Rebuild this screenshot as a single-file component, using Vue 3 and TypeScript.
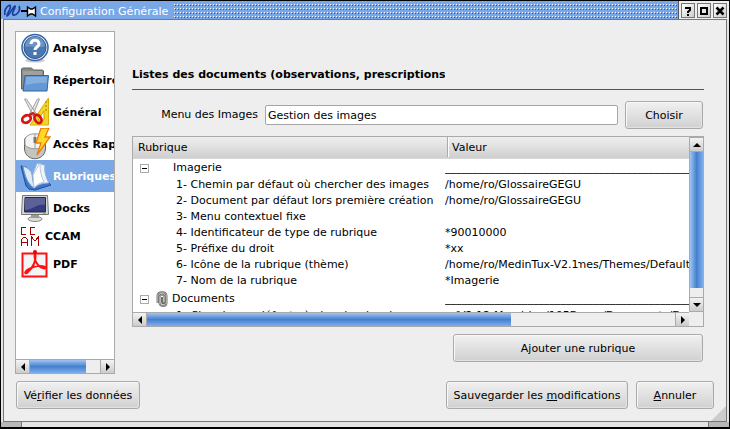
<script setup lang="ts">
import { ref } from 'vue'

interface NavItem {
  id: string
  label: string
  small?: boolean
}
interface TreeRow {
  label: string
  value: string
  clippedTail?: string
}

const navItems: NavItem[] = [
  { id: 'analyse', label: 'Analyse' },
  { id: 'repertoire', label: 'Répertoires' },
  { id: 'general', label: 'Général' },
  { id: 'acces', label: 'Accès Rapide' },
  { id: 'rubriques', label: 'Rubriques' },
  { id: 'docks', label: 'Docks' },
  { id: 'ccam', label: 'CCAM', small: true },
  { id: 'pdf', label: 'PDF' },
]
const selected = ref('rubriques')
const menuImages = ref('Gestion des images')
const rule = '_'.repeat(60)

const imagerie: TreeRow[] = [
  { label: '1- Chemin par défaut où chercher des images', value: '/home/ro/GlossaireGEGU' },
  { label: '2- Document par défaut lors première création', value: '/home/ro/GlossaireGEGU' },
  { label: '3- Menu contextuel fixe', value: '' },
  { label: '4- Identificateur de type de rubrique', value: '*90010000' },
  { label: '5- Préfixe du droit', value: '*xx' },
  { label: '6- Icône de la rubrique (thème)', value: '/home/ro/MedinTux-V2.1', clippedTail: 'mes/Themes/Default' },
  { label: '7- Nom de la rubrique', value: '*Imagerie' },
]
</script>

<template>
  <div class="window">
    <header class="titlebar">
      <svg class="logo" width="34" height="16" viewBox="0 0 34 16">
        <path d="M1 12C0 8 2 3 6 2M6 2c2 3-3 8-3 11 3-1 5-8 8-10 1 2-4 7-2 9 4 1 8-5 6-9" fill="none" stroke="#1b3f9c" stroke-width="1.700" stroke-linejoin="round" />
        <path d="M17 8h6" stroke="#000" stroke-width="2" />
        <path d="M23.500 4l3 2h2l3-2v9l-3-2h-2l-3 2z" fill="#fff" stroke="#000" stroke-width="1.400" />
      </svg>
      <h1>Configuration Générale</h1>
      <div class="dots"></div>
      <div class="controls">
        <button type="button" aria-label="Aide">
          <svg width="12" height="12" viewBox="0 0 12 12"><path d="M4 4V3h4v2L6 7v1M6 9v2" fill="none" stroke="#000" stroke-width="2" /></svg>
        </button>
        <button type="button" aria-label="Agrandir">
          <svg width="12" height="12" viewBox="0 0 12 12"><path d="M3 3h6v6H3z" fill="none" stroke="#000" stroke-width="2" /></svg>
        </button>
        <button type="button" aria-label="Fermer">
          <svg width="12" height="12" viewBox="0 0 12 12"><path d="M2.500 2.500l7 7M9.500 2.500l-7 7" stroke="#000" stroke-width="2.600" /></svg>
        </button>
      </div>
    </header>

    <main class="dialog">
      <div class="columns">
        <nav class="sidebar" aria-label="Sections">
          <div class="navlist">
            <button
              v-for="item in navItems"
              :key="item.id"
              type="button"
              class="navitem"
              :class="{ active: selected === item.id, small: item.small }"
              @click="selected = item.id"
            >
              <svg v-if="item.id === 'analyse'" width="28" height="30" viewBox="0 0 28 30">
                <ellipse cx="14" cy="27.500" rx="10" ry="2" fill="#ccc" />
                <circle cx="14" cy="14.500" r="13" fill="#e9eff7" stroke="#3465a4" stroke-width="1.500" />
                <circle cx="14" cy="14.500" r="11" fill="#4a78b4" stroke="#2c548c" />
                <path d="M4 14a10 10 0 0 1 20-1C18 16 10 12 4 14z" fill="#7ba1cf" opacity=".7" />
                <path d="M10 11c0-5 8-5 8 0 0 3-4 3-4 6" fill="none" stroke="#fff" stroke-width="3" />
                <path d="M12.500 19h3v3h-3z" fill="#fff" />
              </svg>
              <svg v-else-if="item.id === 'repertoire'" width="28" height="30" viewBox="0 0 28 30">
                <path d="M.500 24V4l1-1h9l2 2h9l1 1v18z" fill="#888a85" stroke="#62645f" />
                <path d="M2 7h19M2 9h19" stroke="#b8b9b5" />
                <path d="M4 10.500h23.500L26 26H2z" fill="#6599d3" stroke="#2f65a5" />
                <path d="M5.500 12H26l-.5 6C18 17 11 19 4.500 20z" fill="#91b8e3" opacity=".7" />
              </svg>
              <svg v-else-if="item.id === 'general'" width="28" height="30" viewBox="0 0 28 30">
                <path d="M27.500 1v27H9z" fill="#f4d527" stroke="#d6af05" />
                <path d="M23 14v9h-6z" fill="#fff" stroke="#c9a503" />
                <path d="M26 5h-2M26 9h-2M26 13h-2" stroke="#9b7b00" />
                <path d="M3.500 2l2 0 10 15-3 2zM18.500 2l-2 0-8 15 3 2z" fill="#e5e5e3" stroke="#a0a29c" />
                <ellipse cx="5.500" cy="22" rx="4.500" ry="3.500" transform="rotate(-30 5.500 22)" fill="none" stroke="#d51616" stroke-width="2.800" />
                <ellipse cx="17" cy="22" rx="3" ry="4.500" transform="rotate(-35 17 22)" fill="none" stroke="#d51616" stroke-width="2.800" />
                <path d="M8 18l4-2 3 3" fill="none" stroke="#d51616" stroke-width="2" />
              </svg>
              <svg v-else-if="item.id === 'acces'" width="28" height="32" viewBox="0 0 28 32">
                <path d="M3.500 12c0-7 21-7 21 0v9c-1 13-20 13-21 0z" fill="#c4c5c1" stroke="#666864" />
                <path d="M4 17V11C6 4 22 4 24 11v6c-4 5-16 5-20 0z" fill="#f4f4f2" stroke="#999b96" />
                <path d="M14 6v14" stroke="#999b96" />
                <path d="M12.500 9h3v6h-3z" fill="#777" />
                <path d="M20 0h8l-4 9h5L16 27l4-12h-5z" fill="#ffd927" stroke="#f57900" stroke-width="1.300" />
              </svg>
              <svg v-else-if="item.id === 'rubriques'" width="28" height="32" viewBox="0 0 28 32">
                <path d="M0 6l5 1 8 17 13-3 4 4-16 5-6-1-3-3z" fill="#3c76cf" stroke="#1e4e9c" stroke-linejoin="round" />
                <path d="M2 6c5 2 8 4 9 8l2 14C8 25 4 18 2 6z" fill="#dfeaf7" stroke="#6d97d0" />
                <path d="M12 13l4-10 8 2c-1 6 1 13 4 18-5 0-11 1-15 5z" fill="#eef3fa" stroke="#8dadd8" />
                <path d="M12 15l7-12c0 8 1 13 4 19-4 1-8 3-10 6z" fill="#fff" stroke="#b5c7df" />
              </svg>
              <svg v-else-if="item.id === 'docks'" width="28" height="30" viewBox="0 0 28 30">
                <ellipse cx="14" cy="26" rx="7" ry="2.500" fill="#dcdcda" stroke="#888a85" />
                <path d="M10 21h8v4h-8z" fill="#999b96" />
                <path d="M1.500 2.500h25l1 19H.500z" fill="#d8d9d5" stroke="#777973" stroke-linejoin="round" />
                <path d="M4 4.500h20.500v14.500H3.500z" fill="#333b7e" stroke="#26284d" />
                <path d="M4 5h20v7C17 10 10 17 4 17z" fill="#7278a8" opacity=".65" />
                <path d="M22 21h3" stroke="#4e9a06" />
              </svg>
              <svg v-else-if="item.id === 'ccam'" width="20" height="20" viewBox="0 0 20 20" shape-rendering="crispEdges">
                <path d="M5 1.500H.500V8.500H5M14 1.500H9.500V8.500H14M.500 20v-6l2-3h2l2 3v6M.500 16.500h6M10.500 20v-9l3.500 4 3.500-4v9" fill="none" stroke="#a40000" />
              </svg>
              <svg v-else width="28" height="30" viewBox="0 0 28 30">
                <path d="M1.500 4.500h24v23h-24z" fill="#f3f6f6" stroke="#f11" stroke-width="2" />
                <path d="M14 4c2 7-2 15-8 20-3 1-2-2 2-4 6-3 12-4 16-2 2 2-3 2-6-1-4-4-5-9-4-13z" fill="none" stroke="#f11" stroke-width="2" stroke-linejoin="round" />
                <circle cx="14" cy="3" r="2" fill="#e00" />
              </svg>
              <span>{{ item.label }}</span>
            </button>
          </div>
          <div class="hbar">
            <button type="button" class="arrow" aria-label="Gauche"><svg width="4" height="8" viewBox="0 0 4 8"><path d="M4 0v8L0 4z" /></svg></button>
            <div class="track"><div class="thumb nav-thumb"></div></div>
            <button type="button" class="arrow" aria-label="Droite"><svg width="4" height="8" viewBox="0 0 4 8"><path d="M0 0v8l4-4z" /></svg></button>
          </div>
        </nav>

        <section class="panel">
          <h2><span>Listes des documents (observations, prescriptions)</span></h2>
          <div class="form">
            <label for="menu-images">Menu des Images</label>
            <input id="menu-images" v-model="menuImages" type="text" />
            <button type="button" class="btn choose">Choisir</button>
          </div>

          <div class="tree">
            <div class="tree-row">
              <div class="viewport">
                <table>
                  <colgroup><col class="col-name" /><col /></colgroup>
                  <thead>
                    <tr><th scope="col">Rubrique</th><th scope="col" class="second"><span>Valeur</span></th></tr>
                  </thead>
                  <tbody>
                    <tr class="group">
                      <td><div class="group-cell"><button type="button" class="toggle" aria-label="Replier Imagerie"></button><span class="group-name plain">Imagerie</span></div></td>
                      <td>{{ rule }}</td>
                    </tr>
                    <tr v-for="row in imagerie" :key="row.label">
                      <td class="child">{{ row.label }}</td>
                      <td>{{ row.value }}<span v-if="row.clippedTail" class="tail"><span>{{ row.clippedTail }}</span></span></td>
                    </tr>
                    <tr class="group documents">
                      <td>
                        <div class="group-cell">
                          <button type="button" class="toggle" aria-label="Replier Documents"></button>
                          <svg class="clip" width="12" height="16" viewBox="0 0 12 16">
                            <path d="M1.500 12V5c0-5 9-5 9 0v7c0 4-7 4-7 0V6c0-3 5-3 5 0v5c0 2-2.500 2-2.500 0V6" fill="none" stroke="#666864" stroke-width="1.900" />
                            <path d="M1.500 12V5c0-5 9-5 9 0v7c0 4-7 4-7 0V6c0-3 5-3 5 0v5" fill="none" stroke="#c4c6c0" stroke-width=".700" />
                          </svg>
                          <span class="group-name">Documents</span>
                        </div>
                      </td>
                      <td>{{ rule }}</td>
                    </tr>
                    <tr class="next">
                      <td class="child">1- Chemin par défaut où chercher les docs</td>
                      <td>~/V2.12-Mandriva/105Bases/Documents/Docs</td>
                    </tr>
                  </tbody>
                </table>
              </div>
              <div class="vbar">
                <button type="button" class="arrow" aria-label="Haut"><svg width="8" height="4" viewBox="0 0 8 4"><path d="M0 4h8L4 0z" /></svg></button>
                <div class="track"><div class="thumb"></div></div>
                <button type="button" class="arrow" aria-label="Bas"><svg width="8" height="4" viewBox="0 0 8 4"><path d="M0 0h8L4 4z" /></svg></button>
              </div>
            </div>
            <div class="tree-foot">
              <div class="hbar">
                <button type="button" class="arrow" aria-label="Gauche"><svg width="4" height="8" viewBox="0 0 4 8"><path d="M4 0v8L0 4z" /></svg></button>
                <div class="track"><div class="thumb tree-thumb"></div></div>
                <button type="button" class="arrow" aria-label="Droite"><svg width="4" height="8" viewBox="0 0 4 8"><path d="M0 0v8l4-4z" /></svg></button>
              </div>
            </div>
          </div>
          <button type="button" class="btn add">Ajouter une rubrique</button>
        </section>
      </div>

      <footer class="actions">
        <button type="button" class="btn verify">Vé<u>r</u>ifier les données</button>
        <button type="button" class="btn save">Sauvegarder les <u>m</u>odifications</button>
        <button type="button" class="btn cancel"><u>A</u>nnuler</button>
      </footer>
      <svg class="grip" width="15" height="15" viewBox="0 0 15 15"><path d="M15 0v15H0z" fill="#ccc" /></svg>
    </main>
    <div class="bottom-frame"><span></span><span></span><span></span></div>
  </div>
</template>

<style>
body {
  margin: 0;
}
</style>

<style scoped>
* {
  box-sizing: border-box;
}
.window {
  display: flex;
  flex-direction: column;
  height: 100vh;
  min-height: 400px;
  border: 1px solid #000;
  border-bottom-width: 2px;
  background: #e4e4e4;
  color: #000;
  font: 11px/16px "DejaVu Sans", sans-serif;
}
button,
input {
  font: inherit;
  color: inherit;
  margin: 0;
  padding: 0;
}
svg {
  display: block;
  flex: none;
}
.titlebar {
  display: flex;
  align-items: stretch;
  height: 18px;
  flex: none;
  padding-left: 3px;
  background: #7aa7e6;
}
.logo {
  margin-top: 2px;
}
h1 {
  margin: 0 6px 0 2px;
  font-size: 11px;
  font-weight: 400;
  line-height: 21px;
  color: #fff;
  white-space: nowrap;
}
.dots {
  flex: 1;
  margin: 3px 0 1px;
  background:
    conic-gradient(from 0deg at 1px 1px, transparent 75%, #fff 0) 0 0 / 3px 4px,
    conic-gradient(from 0deg at 1px 1px, transparent 75%, #2f5a9c 0) 1px 1px / 3px 4px;
}
.controls {
  display: flex;
  gap: 2px;
  padding: 2px 2px 0;
  border-left: 1px solid #555;
  background: #eee;
}
.controls button {
  display: grid;
  place-items: center;
  width: 14px;
  height: 15px;
  border: 1px solid #777;
  background: linear-gradient(135deg, #fff, #ccc);
}
.dialog {
  position: relative;
  display: flex;
  flex: 1;
  flex-direction: column;
  gap: 7px;
  min-height: 0;
  margin: 0 2px;
  padding: 11px 12px 12px 11px;
  border: 1px solid #777;
  background: #eee;
}
.columns {
  display: flex;
  flex: 1;
  gap: 17px;
  min-height: 0;
  padding-right: 10px;
}
.sidebar {
  display: flex;
  flex-direction: column;
  flex: none;
  width: 100px;
  border: 1px solid #aaa;
  background: #fff;
}
.navlist {
  flex: 1;
  overflow: hidden;
}
.navitem {
  display: flex;
  align-items: center;
  gap: 4px;
  width: 100%;
  height: 32px;
  padding-left: 5px;
  border: 0;
  overflow: hidden;
  background: none;
  font-weight: 700;
  white-space: nowrap;
}
.navitem span {
  flex: none;
  padding-top: 2px;
}
.navitem svg {
  overflow: visible;
}
.navitem.small {
  height: 24px;
}
.navitem.active {
  background: #7aa7e6;
  color: #fff;
}
.panel {
  display: flex;
  flex: 1;
  flex-direction: column;
  min-width: 0;
  padding-bottom: 12px;
}
h2 {
  flex: none;
  margin: 0 0 11px;
  padding: 36px 0 6px;
  border-bottom: 1px solid #555;
  font-size: 11px;
  line-height: 16px;
}
h2 span {
  display: block;
  width: 313px;
  overflow: hidden;
  white-space: nowrap;
}
.form {
  display: flex;
  align-items: center;
  gap: 7px;
  padding: 0 1px 0 23px;
  margin-bottom: 7px;
}
.form label {
  width: 103px;
  text-align: right;
}
.form input {
  flex: 1;
  min-width: 0;
  height: 20px;
  padding: 0 2px;
  border: 1px solid #a5a5a5;
  border-radius: 2px;
  background: #fff;
  outline: none;
}
.btn {
  height: 28px;
  flex: none;
  padding-top: 1px;
  border: 1px solid #aaa;
  border-radius: 3px;
  background: linear-gradient(#f1f1f1, #d0d0d0);
  box-shadow: inset 1px 1px #f8f8f8, inset -1px -1px #e2e2e2;
  white-space: nowrap;
}
.choose {
  width: 78px;
}
.tree {
  display: flex;
  flex: 1;
  flex-direction: column;
  min-height: 0;
  border: 1px solid #aaa;
  background: #fff;
}
.tree-row {
  display: flex;
  flex: 1;
  min-height: 0;
}
.viewport {
  flex: 1;
  min-width: 0;
  overflow: hidden;
}
table {
  width: 100%;
  table-layout: fixed;
  border-collapse: collapse;
}
.col-name {
  width: 312px;
}
th {
  height: 21px;
  padding: 1px 0 0 5px;
  border-bottom: 1px solid #d8d8d8;
  background: linear-gradient(#efefef, #cfcfcf);
  font-weight: 400;
  text-align: left;
}
th.second {
  padding: 0 0 0 2px;
}
.second span {
  display: block;
  padding: 1px 0 0 4px;
  border-left: 1px solid #aaa;
  box-shadow: inset 1px 0 #fff;
  line-height: 19px;
}
td {
  height: 16px;
  padding: 2px 0 0;
  line-height: 14px;
  overflow: hidden;
  white-space: nowrap;
}
.next td {
  padding-top: 0;
}
td.child {
  padding-left: 43px;
}
.group td {
  height: 18px;
}
.group.documents td {
  height: 20px;
}
.group-cell {
  display: flex;
  align-items: center;
  gap: 8px;
  padding-left: 7px;
}
.toggle {
  display: grid;
  place-items: center;
  width: 9px;
  height: 9px;
  border: 1px solid #aaa;
  background: #fff;
}
.toggle::before {
  content: "";
  width: 5px;
  height: 1px;
  background: #000;
}
.group-name.plain {
  margin-left: 16px;
}
.documents .group-cell {
  gap: 4px;
}
.clip {
  margin-left: 3px;
}
.tail {
  display: inline-block;
  height: 14px;
  overflow: hidden;
  vertical-align: top;
}
.tail span {
  margin-left: -3px;
}
.vbar {
  display: flex;
  flex-direction: column;
  width: 14px;
  border: 1px solid #aaa;
  border-right: 0;
}
.hbar {
  display: flex;
  flex: none;
  height: 14px;
  border-top: 1px solid #aaa;
}
.tree-foot {
  flex: none;
  padding-right: 14px;
  background: #eee;
}
.arrow {
  display: grid;
  place-items: center;
  flex: none;
  width: 13px;
  height: 13px;
  border: 0;
  background: linear-gradient(#f3f3f3, #ccc);
}
.track {
  flex: 1;
  min-height: 0;
  border: 0 solid #aaa;
  background: #eee;
}
.hbar .track {
  border-width: 0 1px;
}
.vbar .track {
  border-width: 1px 0;
}
.hbar .thumb {
  height: 100%;
  background: linear-gradient(#9fc5f5, #4680cd 50%, #7eaeee);
}
.vbar .thumb {
  height: 94%;
  background: linear-gradient(90deg, #9fc5f5, #4680cd 50%, #7eaeee);
}
.hbar .nav-thumb {
  width: 80%;
}
.hbar .tree-thumb {
  width: 69%;
}
.add {
  align-self: flex-end;
  width: 250px;
  margin: 7px 1px 0 0;
}
.actions {
  display: flex;
  gap: 8px;
  padding-left: 1px;
}
.verify {
  width: 124px;
  margin-right: auto;
}
.save {
  width: 182px;
}
.cancel {
  width: 78px;
}
.grip {
  position: absolute;
  right: 0;
  bottom: 0;
}
.bottom-frame {
  display: flex;
  flex: none;
  height: 5px;
}
.bottom-frame span {
  width: 20px;
  background: #b8b8b8;
}
.bottom-frame span:nth-child(2) {
  flex: 1;
  border: 0 solid #777;
  border-width: 0 1px;
  background: #e4e4e4;
}
</style>
